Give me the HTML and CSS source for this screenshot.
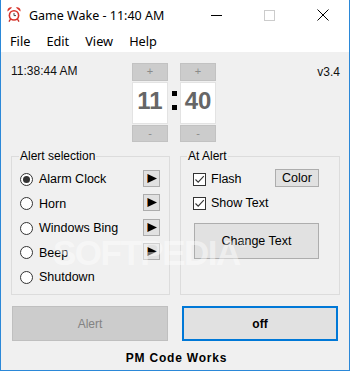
FILE: index.html
```html
<!DOCTYPE html>
<html>
<head>
<meta charset="utf-8">
<title>Game Wake</title>
<link rel="stylesheet" href="styles.css">
</head>
<body>
<div class="window">
  <div class="titlebar">
    <svg class="app-icon" width="14" height="15" viewBox="0 0 14 15">
      <path d="M0.6 4.4 A3.3 3.3 0 0 1 5.2 0.6 Z" fill="#d9342b"/>
      <path d="M13.4 4.4 A3.3 3.3 0 0 0 8.8 0.6 Z" fill="#d9342b"/>
      <line x1="3.6" y1="12" x2="2" y2="14.6" stroke="#c62d25" stroke-width="1.4"/>
      <line x1="10.4" y1="12" x2="12" y2="14.6" stroke="#c62d25" stroke-width="1.4"/>
      <circle cx="7" cy="8.4" r="5.4" fill="#d9342b"/>
      <circle cx="7" cy="8.4" r="3.8" fill="#ffffff"/>
      <path d="M7 6 V8.6 H9" fill="none" stroke="#444" stroke-width="1"/>
    </svg>
    <span class="title">Game Wake - 11:40 AM</span>
    <div class="controls">
      <div class="ctl"><svg width="11" height="11" viewBox="0 0 11 11"><line x1="0" y1="5.5" x2="11" y2="5.5" stroke="#000" stroke-width="1"/></svg></div>
      <div class="ctl"><svg width="11" height="11" viewBox="0 0 11 11"><rect x="0.5" y="0.5" width="10" height="10" fill="none" stroke="#cccccc" stroke-width="1"/></svg></div>
      <div class="ctl"><svg width="12" height="12" viewBox="0 0 12 12"><path d="M0.5 0.5 L11.5 11.5 M11.5 0.5 L0.5 11.5" stroke="#000" stroke-width="1"/></svg></div>
    </div>
  </div>
  <div class="menubar">
    <span class="menu-item">File</span>
    <span class="menu-item">Edit</span>
    <span class="menu-item">View</span>
    <span class="menu-item">Help</span>
  </div>
  <div class="content">
    <div class="top-row">
      <div class="now">11:38:44 AM</div>
      <div class="clock">
        <div class="spin">
          <div class="spin-btn">+</div>
          <div class="digits">11</div>
          <div class="spin-btn minus">-</div>
        </div>
        <div class="colon"><i></i><i></i></div>
        <div class="spin">
          <div class="spin-btn">+</div>
          <div class="digits">40</div>
          <div class="spin-btn minus">-</div>
        </div>
      </div>
      <div class="version">v3.4</div>
    </div>

    <div class="groups">
      <div class="group g1">
        <div class="legend">Alert selection</div>
        <div class="row">
          <span class="radio checked"></span><span class="label">Alarm Clock</span>
          <span class="play"><svg width="10" height="9" viewBox="0 0 10 9"><path d="M0.5 0 L10 4.5 L0.5 9 Z" fill="#000"/><line x1="0.5" y1="0.5" x2="0.5" y2="8.5" stroke="#b5651d" stroke-width="1"/></svg></span>
        </div>
        <div class="row">
          <span class="radio"></span><span class="label">Horn</span>
          <span class="play"><svg width="10" height="9" viewBox="0 0 10 9"><path d="M0.5 0 L10 4.5 L0.5 9 Z" fill="#000"/><line x1="0.5" y1="0.5" x2="0.5" y2="8.5" stroke="#b5651d" stroke-width="1"/></svg></span>
        </div>
        <div class="row">
          <span class="radio"></span><span class="label">Windows Bing</span>
          <span class="play"><svg width="10" height="9" viewBox="0 0 10 9"><path d="M0.5 0 L10 4.5 L0.5 9 Z" fill="#000"/><line x1="0.5" y1="0.5" x2="0.5" y2="8.5" stroke="#b5651d" stroke-width="1"/></svg></span>
        </div>
        <div class="row">
          <span class="radio"></span><span class="label">Beep</span>
          <span class="play"><svg width="10" height="9" viewBox="0 0 10 9"><path d="M0.5 0 L10 4.5 L0.5 9 Z" fill="#000"/><line x1="0.5" y1="0.5" x2="0.5" y2="8.5" stroke="#b5651d" stroke-width="1"/></svg></span>
        </div>
        <div class="row">
          <span class="radio"></span><span class="label">Shutdown</span>
        </div>
      </div>

      <div class="group g2">
        <div class="legend">At Alert</div>
        <div class="row">
          <span class="check"><svg width="11" height="11" viewBox="0 0 11 11"><path d="M1.5 5.5 L4.2 8.2 L9.8 2.2" fill="none" stroke="#333" stroke-width="1.1"/></svg></span>
          <span class="label">Flash</span>
          <span class="btn color-btn">Color</span>
        </div>
        <div class="row">
          <span class="check"><svg width="11" height="11" viewBox="0 0 11 11"><path d="M1.5 5.5 L4.2 8.2 L9.8 2.2" fill="none" stroke="#333" stroke-width="1.1"/></svg></span>
          <span class="label">Show Text</span>
        </div>
        <div class="btn change-btn">Change Text</div>
      </div>
    </div>

    <div class="actions">
      <div class="btn alert-btn">Alert</div>
      <div class="btn off-btn">off</div>
    </div>
    <div class="footer">PM Code Works</div>
  </div>
  <div class="watermark" aria-hidden="true">SOFTPEDIA<span class="reg">®</span></div>
</div>
</body>
</html>
```

FILE: styles.css
```css
html, body {
  margin: 0;
  padding: 0;
  background: #ffffff;
}

.window {
  position: relative;
  width: 350px;
  height: 371px;
  box-sizing: border-box;
  border: 1px solid #2b88d8;
  border-top: none;
  display: flex;
  flex-direction: column;
  overflow: hidden;
  font-family: "Liberation Sans", Arial, sans-serif;
  color: #000;
}

/* title bar */
.titlebar {
  height: 29px;
  flex: none;
  display: flex;
  align-items: center;
  background: #ffffff;
  padding-top: 1px;
}
.app-icon {
  margin-left: 6px;
  margin-top: -2px;
  flex: none;
}
.title {
  margin-left: 8px;
  font-family: "Noto Sans", "Open Sans", sans-serif;
  font-size: 12.5px;
  line-height: 17px;
}
.controls {
  margin-left: auto;
  display: flex;
  align-self: stretch;
  margin-top: -1px;
}
.ctl {
  width: 53px;
  display: flex;
  align-items: center;
  justify-content: center;
}

/* menu */
.menubar {
  height: 21px;
  flex: none;
  padding-top: 1px;
  padding-left: 1px;
  display: flex;
  background: #ffffff;
  font-family: "Noto Sans", "Open Sans", sans-serif;
  font-size: 12.75px;
  line-height: 21px;
}
.menu-item {
  padding: 0 8px;
}

/* main */
.content {
  flex: 1;
  background: #f0f0f0;
  padding: 0 9px 0 10px;
  display: flex;
  flex-direction: column;
}

.top-row {
  margin-top: 11px;
  height: 80px;
  display: flex;
  align-items: flex-start;
}
.now {
  width: 121px;
  font-size: 12px;
  line-height: 14px;
  padding-top: 1px;
  color: #111;
}
.clock {
  display: flex;
}
.spin {
  width: 36px;
  display: flex;
  flex-direction: column;
}
.spin-btn {
  height: 18px;
  box-sizing: border-box;
  background: #cccccc;
  border: 1px solid #c2c2c2;
  color: #8a8a8a;
  font-size: 11px;
  line-height: 15px;
  text-align: center;
  margin-bottom: 1px;
}
.spin-btn.minus {
  height: 17px;
  margin-bottom: 0;
  line-height: 14px;
}
.digits {
  height: 42px;
  box-sizing: border-box;
  background: #ffffff;
  border: 1px solid #e3e3e3;
  margin-bottom: 1px;
  display: flex;
  align-items: center;
  justify-content: center;
  font-size: 24px;
  font-weight: bold;
  color: #666666;
  padding-bottom: 4px;
}
.colon {
  width: 12px;
  display: flex;
  flex-direction: column;
  align-items: center;
  padding-top: 28px;
  box-sizing: border-box;
}
.colon i {
  display: block;
  width: 5px;
  height: 5px;
  background: #000;
  margin-bottom: 9px;
}
.version {
  margin-left: auto;
  font-size: 12px;
  line-height: 14px;
  padding-top: 2px;
  color: #111;
}

/* groups */
.groups {
  margin-top: 13px;
  display: flex;
  gap: 10px;
}
.group {
  height: 139px;
  box-sizing: border-box;
  border: 1px solid #dcdcdc;
  display: flex;
  flex-direction: column;
}
.g1 { width: 159px; }
.g2 { width: 160px; }

.legend {
  align-self: flex-start;
  margin-top: -8px;
  height: 14px;
  line-height: 14px;
  font-size: 12px;
  padding: 0 1px;
  background: #f0f0f0;
}
.g1 .legend { margin-left: 7px; }
.g2 .legend { margin-left: 6px; }

.row {
  height: 24px;
  display: flex;
  align-items: center;
  font-size: 12.5px;
}
.legend + .row {
  margin-top: 3px;
}
.g1 .row {
  height: 24.5px;
  padding-left: 8px;
  padding-right: 9px;
}
.g1 .legend + .row {
  margin-top: 4px;
}
.g2 .row {
  padding-left: 12px;
  padding-right: 20px;
}
.g2 .legend + .row {
  margin-top: 4px;
}

.radio {
  width: 13px;
  height: 13px;
  box-sizing: border-box;
  border: 1px solid #333333;
  border-radius: 50%;
  background: #ffffff;
  display: flex;
  align-items: center;
  justify-content: center;
  flex: none;
}
.radio.checked::after {
  content: "";
  width: 7px;
  height: 7px;
  border-radius: 50%;
  background: #333333;
}
.g1 .label {
  margin-left: 6px;
}
.play {
  margin-left: auto;
  margin-top: -2px;
  width: 17px;
  height: 17px;
  box-sizing: border-box;
  background: #e1e1e1;
  border: 1px solid #adadad;
  display: flex;
  align-items: center;
  justify-content: center;
  padding-left: 1px;
}

.check {
  width: 13px;
  height: 13px;
  box-sizing: border-box;
  border: 1px solid #333333;
  background: #ffffff;
  display: flex;
  align-items: center;
  justify-content: center;
  flex: none;
}
.g2 .label {
  margin-left: 5px;
}

.btn {
  box-sizing: border-box;
  background: #e1e1e1;
  border: 1px solid #adadad;
  display: flex;
  align-items: center;
  justify-content: center;
  font-size: 12.5px;
}
.color-btn {
  margin-left: auto;
  width: 44px;
  height: 18px;
  margin-top: -3px;
}
.change-btn {
  margin: 8px 0 0 13px;
  width: 125px;
  height: 36px;
}

/* bottom */
.actions {
  margin-top: 11px;
  display: flex;
  gap: 14px;
  padding-left: 1px;
}
.actions .btn {
  width: 156px;
  height: 35px;
  font-size: 12px;
}
.alert-btn {
  background: #cccccc;
  border-color: #bfbfbf;
  color: #838383;
}
.off-btn {
  border: 2px solid #0078d7;
  font-weight: bold;
}
.footer {
  margin-top: 10px;
  text-align: center;
  font-size: 12px;
  line-height: 14px;
  font-weight: bold;
  letter-spacing: 0.8px;
  padding-left: 2px;
}

/* watermark overlay */
.watermark {
  position: absolute;
  left: 52px;
  top: 227px;
  font-family: "Liberation Sans", Arial, sans-serif;
  font-weight: bold;
  font-size: 35px;
  line-height: 34px;
  letter-spacing: -1.5px;
  color: rgba(255, 255, 255, 0.45);
  pointer-events: none;
}
.watermark .reg {
  font-size: 10px;
  vertical-align: 18px;
  letter-spacing: 0;
}
```
